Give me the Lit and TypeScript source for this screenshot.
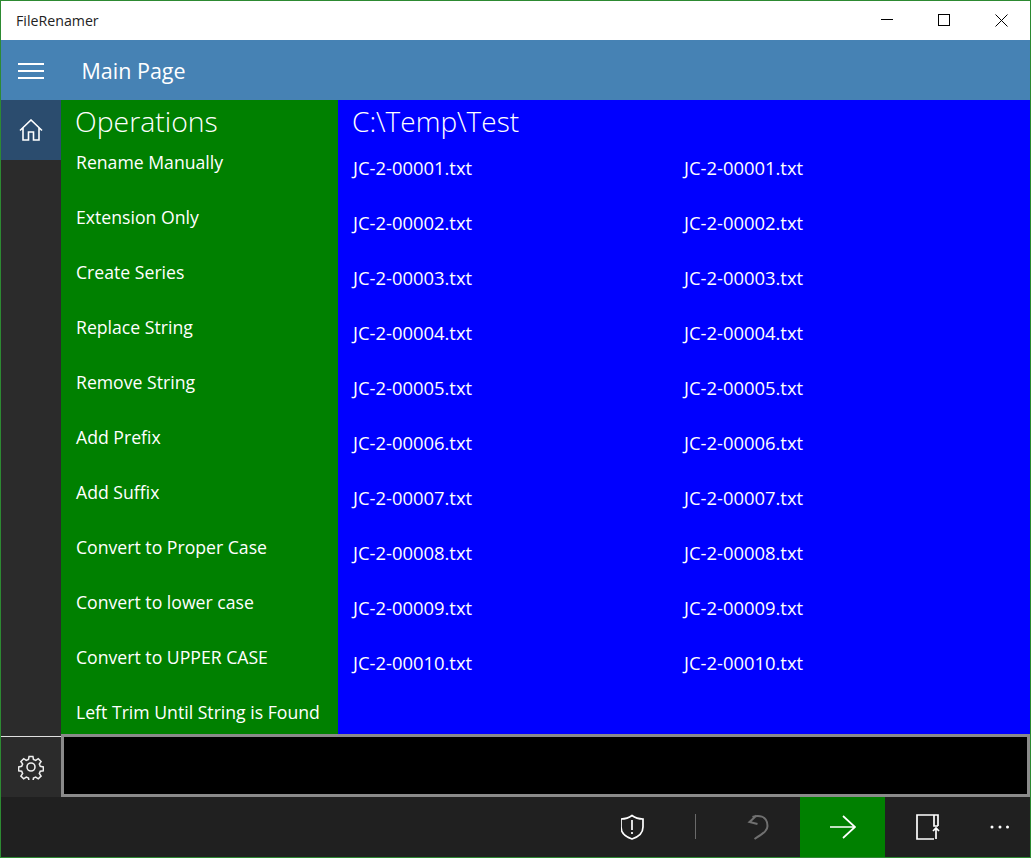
import { LitElement, html, css } from "lit";
import { customElement } from "lit/decorators.js";

const ops = ["Rename Manually","Extension Only","Create Series","Replace String","Remove String","Add Prefix","Add Suffix","Convert to Proper Case","Convert to lower case","Convert to UPPER CASE","Left Trim Until String is Found"];
const files = Array.from({length:10},(_,i)=>`JC-2-${String(i+1).padStart(5,"0")}.txt`);

@customElement("app-root")
export class AppRoot extends LitElement {
  static styles = css`
    :host { display:block; width:1031px; height:858px; font-family:"Open Sans","Noto Sans",sans-serif; color:#fff; overflow:hidden; }
    * { box-sizing:border-box; }
    .win { width:1031px; height:858px; border:1px solid #2d8a32; display:grid; grid-template-rows:39px 60px 634px 63px 60px; grid-template-columns:60px 277px 1fr; background:#202020; }
    .title { grid-column:1/4; background:#fff; color:#222; display:flex; align-items:center; justify-content:space-between; font-size:14.2px; padding-left:15px; }
    .caps { display:flex; height:100%; }
    .cap { width:57px; display:flex; align-items:center; justify-content:center; }
    .head { grid-column:1/4; background:#4682b4; display:flex; align-items:center; }
    .burger { width:60px; display:flex; justify-content:center; padding-top:2px; }
    .head h1 { margin:2px 0 0 20.5px; font-weight:400; font-size:21.5px; line-height:58px; }
    .side { background:#2b2b2b; }
    .homeitem { height:60px; background:#2b4c6e; display:flex; align-items:center; justify-content:center; }
    .ops { background:#008000; padding:4px 0 0 15px; overflow:hidden; }
    .ops h2 { margin:0 0 12px -1px; font-weight:300; font-size:28.4px; line-height:34px; height:34px; }
    .op { height:55px; line-height:24px; font-size:17.65px; white-space:nowrap; }
    .main { background:#0000ff; padding:4px 0 0 14px; overflow:hidden; }
    .main h2 { margin:0; font-weight:300; font-size:28px; line-height:34px; height:34px; }
    .lists { display:grid; grid-template-columns:331px 1fr; padding:18px 0 0 1px; }
    .file { height:55px; line-height:24px; font-size:18.42px; font-weight:400; }
    .gear { background:#2b2b2b; display:flex; flex-direction:column; }
    .rule { height:1px; background:#e0e0e0; margin-top:2px; }
    .gearicon { flex:1; display:flex; align-items:center; justify-content:center; }
    .input { grid-column:2/4; background:#000; border:3px solid #8a8a8a; }
    .bar { grid-column:1/4; background:#202020; display:flex; justify-content:flex-end; align-items:center; }
    .btn { width:85px; height:60px; display:flex; align-items:center; justify-content:center; }
    .btn.go { background:#008000; }
    .sep { width:1px; height:25px; background:#6a6a6a; margin:0 19px 2px 20px; }
    .more { width:60px; }
    svg { display:block; }
  `;

  render() {
    return html`<div class="win">
      <div class="title"><span>FileRenamer</span>
        <div class="caps">
          <div class="cap"><svg width="13" height="13" viewBox="0 0 13 13"><path d="M0 5.5H12" stroke="#000"/></svg></div>
          <div class="cap"><svg width="13" height="13" viewBox="0 0 13 13"><rect x=".5" y=".5" width="11" height="11" fill="none" stroke="#000"/></svg></div>
          <div class="cap"><svg width="13" height="13" viewBox="0 0 13 13"><path d="M.5.5L12.5 12.5M12.5.5L.5 12.5" stroke="#000" fill="none"/></svg></div>
        </div>
      </div>
      <div class="head">
        <div class="burger"><svg width="26" height="16" viewBox="0 0 26 16"><path d="M0 1H26M0 8H26M0 15H26" stroke="#fff" stroke-width="2"/></svg></div>
        <h1>Main Page</h1>
      </div>
      <div class="side"><div class="homeitem"><svg width="24" height="22" viewBox="0 0 24 22" fill="none" stroke="#fff" stroke-width="1.6"><path d="M1 11.5L12 1L23 11.5M4 9V21H9.5V13H14.5V21H20V9"/></svg></div></div>
      <div class="ops"><h2>Operations</h2>${ops.map(o=>html`<div class="op">${o}</div>`)}</div>
      <div class="main"><h2>C:\\Temp\\Test</h2>
        <div class="lists"><div>${files.map(f=>html`<div class="file">${f}</div>`)}</div><div>${files.map(f=>html`<div class="file">${f}</div>`)}</div></div>
      </div>
      <div class="gear"><div class="rule"></div><div class="gearicon"><svg width="26" height="26" viewBox="0 0 26 26" fill="none" stroke="#eee" stroke-width="1.6"><circle cx="13" cy="13" r="4"/><path d="M11 2h4l.6 3.2 2.3 1 2.7-1.8 2.9 2.9-1.8 2.7 1 2.3 3.2.6v4l-3.2.6-1 2.3 1.8 2.7-2.9 2.9-2.7-1.8-2.3 1-.6 3.2h-4l-.6-3.2-2.3-1-2.7 1.8-2.9-2.9 1.8-2.7-1-2.3-3.2-.6v-4l3.2-.6 1-2.3-1.8-2.7 2.9-2.9 2.7 1.8 2.3-1z" transform="translate(.5 .5) scale(.96)"/></svg></div></div>
      <div class="input"></div>
      <div class="bar">
        <div class="btn"><svg width="24" height="26" viewBox="1 0 24 26" fill="none" stroke="#fff" stroke-width="1.7"><path d="M12 1.5C9 3.8 5 5 1 5V13C1 19 6 23 12 25C18 23 23 19 23 13V5C19 5 15 3.8 12 1.5Z"/><path d="M12 6V16M12 18V20"/></svg></div>
        <div class="sep"></div>
        <div class="btn"><svg width="22" height="26" viewBox="0 0 22 26" fill="none" stroke="#707070" stroke-width="2"><path d="M9.5 1.5L2.5 8L10.5 10M5.5 3C10.5 1 20.5 1 20.5 12C20.5 16 18.5 18 7.5 25"/></svg></div>
        <div class="btn go"><svg width="26" height="24" viewBox="0 0 26 24" fill="none" stroke="#fff" stroke-width="1.7"><path d="M0 12H25M13 1L25 12L13 23"/></svg></div>
        <div class="btn"><svg width="24" height="26" viewBox="0 0 24 26" fill="none" stroke="#fff" stroke-width="1.7"><path d="M18 25H1V1H22V12M18 1V12H22M20 25V14M17 17L20 14L23 17"/></svg></div>
        <div class="btn more"><svg width="20" height="4" viewBox="0 0 20 4" fill="#fff"><circle cx="2" cy="2" r="1.5"/><circle cx="10" cy="2" r="1.5"/><circle cx="17.5" cy="2" r="1.5"/></svg></div>
      </div>
    </div>`;
  }
}
